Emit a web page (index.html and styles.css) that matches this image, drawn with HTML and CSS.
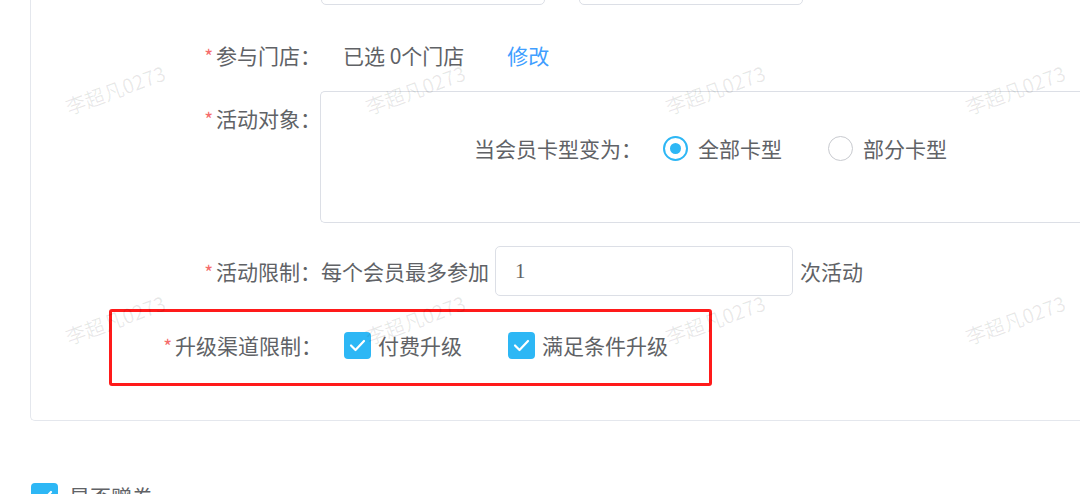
FILE: index.html
```html
<!DOCTYPE html>
<html lang="zh-CN">
<head>
<meta charset="utf-8">
<title>升级活动</title>
<link rel="stylesheet" href="styles.css">
</head>
<body>
<div class="page">
  <div class="card">
    <div class="row row-top">
      <div class="label"></div>
      <div class="content">
        <div class="input input-date"></div>
        <div class="input input-date"></div>
      </div>
    </div>

    <div class="row row-store">
      <div class="label"><span class="req">*</span>参与门店：</div>
      <div class="content">
        <span class="value">已选 0个门店</span>
        <a class="link">修改</a>
      </div>
    </div>

    <div class="row row-target">
      <div class="label label-top"><span class="req">*</span>活动对象：</div>
      <div class="content">
        <div class="target-box">
          <span class="target-title">当会员卡型变为：</span>
          <label class="radio checked"><span class="radio-dot"></span><span>全部卡型</span></label>
          <label class="radio"><span class="radio-dot"></span><span>部分卡型</span></label>
        </div>
      </div>
    </div>

    <div class="row row-limit">
      <div class="label"><span class="req">*</span>活动限制：</div>
      <div class="content">
        <span>每个会员最多参加</span>
        <div class="input input-num">1</div>
        <span class="suffix">次活动</span>
      </div>
    </div>

    <div class="highlight">
      <div class="row row-channel">
        <div class="label label-narrow"><span class="req">*</span>升级渠道限制：</div>
        <div class="content">
          <label class="check">
            <span class="check-box"><svg viewBox="0 0 27 27" width="27" height="27"><path d="M7 13.5 L11.5 18 L20 9" fill="none" stroke="#fff" stroke-width="2.2" stroke-linecap="round" stroke-linejoin="round"/></svg></span>
            <span>付费升级</span>
          </label>
          <label class="check">
            <span class="check-box"><svg viewBox="0 0 27 27" width="27" height="27"><path d="M7 13.5 L11.5 18 L20 9" fill="none" stroke="#fff" stroke-width="2.2" stroke-linecap="round" stroke-linejoin="round"/></svg></span>
            <span>满足条件升级</span>
          </label>
        </div>
      </div>
    </div>
  </div>

  <div class="extra">
    <label class="check">
      <span class="check-box"><svg viewBox="0 0 27 27" width="27" height="27"><path d="M7 13.5 L11.5 18 L20 9" fill="none" stroke="#fff" stroke-width="2.2" stroke-linecap="round" stroke-linejoin="round"/></svg></span>
      <span>是否赠券</span>
    </label>
  </div>

  <div class="watermarks">
    <span>李超凡0273</span><span>李超凡0273</span><span>李超凡0273</span><span>李超凡0273</span>
    <span>李超凡0273</span><span>李超凡0273</span><span>李超凡0273</span><span>李超凡0273</span>
  </div>
</div>
</body>
</html>
```

FILE: styles.css
```css
html, body {
  margin: 0;
  padding: 0;
  overflow: hidden;
  background: #fff;
}

body {
  font-family: "Noto Sans CJK SC", "Noto Sans", sans-serif;
  font-size: 21px;
  color: #606266;
}

.page {
  position: relative;
  width: 1080px;
  height: 494px;
  overflow: hidden;
}

.card {
  margin-top: -60px;
  margin-left: 30px;
  width: 1100px;
  border-left: 1px solid #e4e7ed;
  border-bottom: 1px solid #e4e7ed;
  border-bottom-left-radius: 5px;
  padding-bottom: 34px;
}

.row {
  display: flex;
  align-items: flex-start;
}

.label {
  width: 290px;
  flex: none;
  text-align: right;
  white-space: nowrap;
  line-height: 40px;
}

.label-narrow {
  width: 210px;
}

.req {
  color: #f56c6c;
  font-size: 19px;
  margin-right: 3px;
}

.content {
  flex: 1;
  display: flex;
  align-items: center;
  white-space: nowrap;
}

.input {
  box-sizing: border-box;
  height: 50px;
  border: 1px solid #dcdfe6;
  border-radius: 5px;
  background: #fff;
}

.row-top {
  padding-top: 15px;
}

.row-top .content {
  gap: 34px;
}

.input-date {
  width: 224px;
}

.row-store {
  margin-top: 30px;
  height: 40px;
  line-height: 40px;
}

.value {
  margin-left: 22px;
}

.link {
  margin-left: 43px;
  color: #409eff;
  cursor: pointer;
}

.row-target {
  margin-top: 16px;
}

.label-top {
  padding-top: 7px;
}

.row-target .content {
  margin-left: -1px;
}

.target-box {
  box-sizing: border-box;
  flex: 1;
  height: 132px;
  border: 1px solid #dcdfe6;
  border-right: none;
  border-radius: 5px 0 0 5px;
  padding: 41px 0 0 153px;
  display: flex;
  align-items: center;
  align-self: flex-start;
  height: 132px;
  line-height: 30px;
}

.target-box {
  align-items: flex-start;
}

.target-title {
  margin-right: 21px;
}

.radio {
  display: flex;
  align-items: center;
  gap: 10px;
  margin-right: 46px;
  height: 30px;
}

.radio-dot {
  box-sizing: border-box;
  width: 25px;
  height: 25px;
  border: 1.5px solid #c8cacf;
  border-radius: 50%;
  background: #fff;
  display: flex;
  align-items: center;
  justify-content: center;
}

.radio.checked .radio-dot {
  border: 2px solid #2db7f5;
}

.radio.checked .radio-dot::after {
  content: "";
  width: 11px;
  height: 11px;
  border-radius: 50%;
  background: #2db7f5;
}

.row-limit {
  margin-top: 23px;
  height: 50px;
}

.row-limit .label {
  line-height: 50px;
}

.row-limit .content {
  height: 50px;
}

.input-num {
  width: 298px;
  margin-left: 6px;
  padding-left: 19px;
  line-height: 48px;
  color: #606266;
  font-family: "Liberation Serif", "Noto Sans CJK SC", serif;
}

.suffix {
  margin-left: 7px;
}

.highlight {
  box-sizing: border-box;
  margin-top: 13px;
  margin-left: 78px;
  width: 603px;
  height: 77px;
  border: 3px solid #ff1a1a;
  border-radius: 3px;
  padding-top: 13px;
}

.row-channel {
  height: 40px;
}

.row-channel .content {
  height: 40px;
  padding-left: 22px;
  gap: 46px;
}

.check {
  display: flex;
  align-items: center;
  gap: 7px;
}

.check-box {
  width: 27px;
  height: 27px;
  border-radius: 4px;
  background: #2db7f5;
  display: block;
}

.check-box svg {
  display: block;
}

.extra {
  margin-top: 62px;
  margin-left: 31px;
  line-height: 27px;
}

.extra .check {
  gap: 11px;
}

.watermarks {
  position: absolute;
  left: -35px;
  top: -26px;
  display: grid;
  grid-template-columns: repeat(4, 300px);
  grid-template-rows: repeat(2, 230px);
  place-items: center;
  pointer-events: none;
}

.watermarks span {
  font-size: 20px;
  color: rgba(0, 0, 0, 0.09);
  transform: rotate(-20deg);
  white-space: nowrap;
}
```
